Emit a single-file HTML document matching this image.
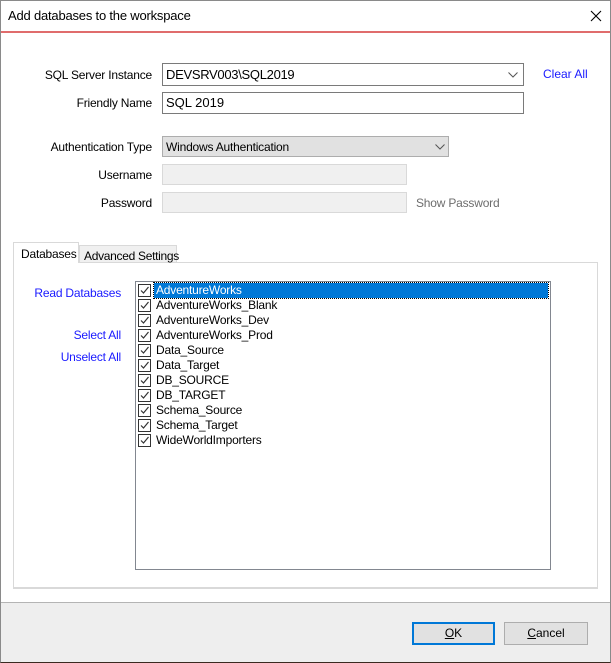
<!DOCTYPE html>
<html><head><style>
*{margin:0;padding:0;box-sizing:border-box}
body{width:611px;height:663px;position:relative;background:#fff;font-family:"Liberation Sans",sans-serif;font-size:12px;color:#000;overflow:hidden}
.a{position:absolute;white-space:nowrap}
.lbl{position:absolute;text-align:right;white-space:nowrap;letter-spacing:-0.2px}
.lnk{color:#1a1aff}
.box{position:absolute;border:1px solid #7a7a7a;background:#fff}
.dis{position:absolute;border:1px solid #d9d9d9;background:#f0f0f0}
.item{position:absolute;left:2px;height:15px;line-height:15px;width:412px;white-space:nowrap;letter-spacing:-0.2px}
.cb{display:inline-block;width:13px;height:13px;border:1px solid #333;vertical-align:top;margin-top:1px;margin-right:5px;position:relative;background:#fff}
.cb svg{position:absolute;left:0;top:0}
</style></head><body>
<div class="a" style="left:0;top:0;width:611px;height:663px;border:1px solid #8a8a8a;border-bottom-color:#3a2a20"></div>
<div class="a" style="left:8px;top:8px;font-size:13px;letter-spacing:-0.2px">Add databases to the workspace</div>
<svg class="a" style="left:590px;top:10px" width="12" height="12"><path d="M1 1L11 11M11 1L1 11" stroke="#000" stroke-width="1.1"/></svg>
<div class="a" style="left:1px;top:31px;width:609px;height:2px;background:#e06c6c"></div>

<div class="lbl" style="right:459px;top:68px">SQL Server Instance</div>
<div class="box" style="left:162px;top:63px;width:362px;height:23px"><span class="a" style="left:3px;top:3px;font-size:13px;letter-spacing:-0.3px">DEVSRV003\SQL2019</span>
<svg class="a" style="left:345px;top:8px" width="10" height="6"><path d="M0.5 0.5L5 5L9.5 0.5" stroke="#555" fill="none"/></svg></div>
<div class="a lnk" style="left:543px;top:67px">Clear All</div>
<div class="lbl" style="right:459px;top:96px">Friendly Name</div>
<div class="box" style="left:162px;top:92px;width:362px;height:22px"><span class="a" style="left:3px;top:2px;font-size:13px">SQL 2019</span></div>

<div class="lbl" style="right:459px;top:140px">Authentication Type</div>
<div class="a" style="left:162px;top:136px;width:287px;height:21px;border:1px solid #adadad;background:#e1e1e1"><span class="a" style="left:3px;top:3px;letter-spacing:-0.2px">Windows Authentication</span>
<svg class="a" style="left:272px;top:7px" width="10" height="6"><path d="M0.5 0.5L5 5L9.5 0.5" stroke="#555" fill="none"/></svg></div>
<div class="lbl" style="right:459px;top:168px">Username</div>
<div class="dis" style="left:162px;top:164px;width:245px;height:21px"></div>
<div class="lbl" style="right:459px;top:196px">Password</div>
<div class="dis" style="left:162px;top:192px;width:245px;height:21px"></div>
<div class="a" style="left:416px;top:196px;color:#6d6d6d;letter-spacing:-0.2px">Show Password</div>

<div class="a" style="left:13px;top:262px;width:585px;height:327px;border:1px solid #d9d9d9;border-bottom:2px solid #d9d9d9;background:#fff"></div>
<div class="a" style="left:79px;top:245px;width:98px;height:18px;border:1px solid #d9d9d9;background:#f0f0f0;padding:3px 0 0 4px;letter-spacing:-0.3px">Advanced Settings</div>
<div class="a" style="left:13px;top:242px;width:66px;height:21px;border:1px solid #d9d9d9;border-bottom:none;background:#fff;padding:4px 0 0 7px;letter-spacing:-0.2px">Databases</div>

<div class="lbl lnk" style="right:490px;top:286px">Read Databases</div>
<div class="lbl lnk" style="right:490px;top:328px">Select All</div>
<div class="lbl lnk" style="right:490px;top:350px">Unselect All</div>

<div class="box" style="left:135px;top:281px;width:416px;height:289px;border-color:#828790">
<div class="item" style="top:1px"><span class="cb"><svg width="11" height="11"><path d="M2 5.5L4.5 8L9.5 2" stroke="#333" fill="none" stroke-width="1.2"/></svg></span><span style="background:#0078d7;color:#fff;display:inline-block;width:394px;height:15px;padding-left:2px;outline:1px dotted #000;margin-left:-2px">AdventureWorks</span></div>
<div class="item" style="top:16px"><span class="cb"><svg width="11" height="11"><path d="M2 5.5L4.5 8L9.5 2" stroke="#333" fill="none" stroke-width="1.2"/></svg></span>AdventureWorks_Blank</div>
<div class="item" style="top:31px"><span class="cb"><svg width="11" height="11"><path d="M2 5.5L4.5 8L9.5 2" stroke="#333" fill="none" stroke-width="1.2"/></svg></span>AdventureWorks_Dev</div>
<div class="item" style="top:46px"><span class="cb"><svg width="11" height="11"><path d="M2 5.5L4.5 8L9.5 2" stroke="#333" fill="none" stroke-width="1.2"/></svg></span>AdventureWorks_Prod</div>
<div class="item" style="top:61px"><span class="cb"><svg width="11" height="11"><path d="M2 5.5L4.5 8L9.5 2" stroke="#333" fill="none" stroke-width="1.2"/></svg></span>Data_Source</div>
<div class="item" style="top:76px"><span class="cb"><svg width="11" height="11"><path d="M2 5.5L4.5 8L9.5 2" stroke="#333" fill="none" stroke-width="1.2"/></svg></span>Data_Target</div>
<div class="item" style="top:91px"><span class="cb"><svg width="11" height="11"><path d="M2 5.5L4.5 8L9.5 2" stroke="#333" fill="none" stroke-width="1.2"/></svg></span>DB_SOURCE</div>
<div class="item" style="top:106px"><span class="cb"><svg width="11" height="11"><path d="M2 5.5L4.5 8L9.5 2" stroke="#333" fill="none" stroke-width="1.2"/></svg></span>DB_TARGET</div>
<div class="item" style="top:121px"><span class="cb"><svg width="11" height="11"><path d="M2 5.5L4.5 8L9.5 2" stroke="#333" fill="none" stroke-width="1.2"/></svg></span>Schema_Source</div>
<div class="item" style="top:136px"><span class="cb"><svg width="11" height="11"><path d="M2 5.5L4.5 8L9.5 2" stroke="#333" fill="none" stroke-width="1.2"/></svg></span>Schema_Target</div>
<div class="item" style="top:151px"><span class="cb"><svg width="11" height="11"><path d="M2 5.5L4.5 8L9.5 2" stroke="#333" fill="none" stroke-width="1.2"/></svg></span>WideWorldImporters</div>
</div>

<div class="a" style="left:1px;top:602px;width:609px;height:60px;background:#eeeeee;border-top:1px solid #b4b4b4"></div>
<div class="a" style="left:412px;top:622px;width:83px;height:23px;border:2px solid #0078d7;background:#e1e1e1;text-align:center;line-height:19px"><u>O</u>K</div>
<div class="a" style="left:504px;top:622px;width:84px;height:23px;border:1px solid #adadad;background:#e1e1e1;text-align:center;line-height:21px"><u>C</u>ancel</div>
</body></html>
